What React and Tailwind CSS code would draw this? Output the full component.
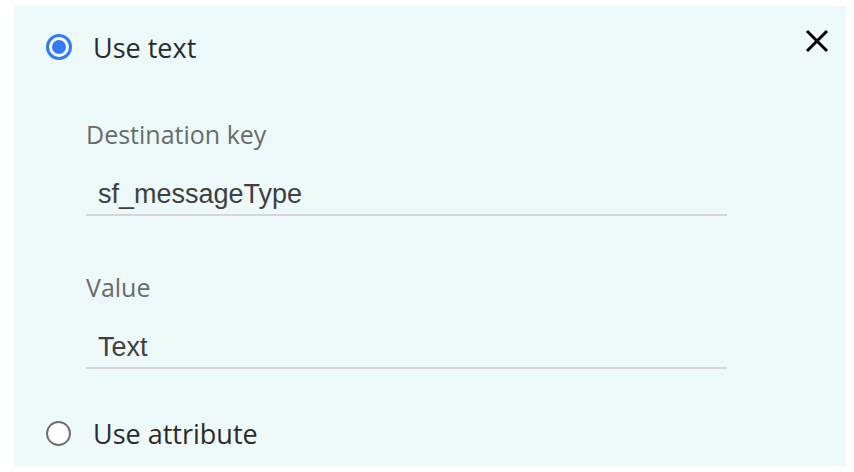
import React, { useState } from "react";

const labelFont = { fontFamily: '"Open Sans", "Noto Sans", sans-serif' };
const inputFont = { fontFamily: '"Liberation Sans", Arial, sans-serif' };

function Radio({ checked }) {
  if (checked) {
    return (
      <span className="flex h-[26px] w-[26px] shrink-0 items-center justify-center rounded-full border-[3px] border-[#2f7cf6] bg-white">
        <span className="h-[14px] w-[14px] rounded-full bg-[#2f7cf6]" />
      </span>
    );
  }
  return <span className="mt-[1px] h-[25px] w-[25px] shrink-0 rounded-full border-2 border-[#6f6f6f] bg-white" />;
}

function Field({ label, value }) {
  return (
    <div className="w-[641px]">
      <div className="h-[28px] text-[25px] leading-[28px] text-[#6b6b6b]" style={labelFont}>
        {label}
      </div>
      <div className="mt-[31px] border-b-2 border-[#d6d6d6] pb-[5px] pl-[12px] text-[27px] leading-[30px] text-[#404040]" style={inputFont}>
        {value}
      </div>
    </div>
  );
}

export default function App() {
  const [mode, setMode] = useState("text");

  return (
    <div className="min-h-screen bg-white pl-[14px] pt-[6px]">
      <div className="flex h-[460px] w-[832px] flex-col bg-[#edf9f9] pl-[32px] pr-[16px] pt-[28px]">
        <div className="flex h-[28px] items-start">
          <button onClick={() => setMode("text")} className="flex items-start gap-[21px]">
            <Radio checked={mode === "text"} />
            <span className="text-[27px] leading-[28px] text-[#2b2b2b]" style={labelFont}>
              Use text
            </span>
          </button>
          <div className="flex-1" />
          <button className="-mt-[5px] mr-[1px] text-black" title="Close">
            <svg width="24" height="24" viewBox="0 0 24 24">
              <path d="M2 2 L22 22 M22 2 L2 22" stroke="currentColor" strokeWidth="3" fill="none" />
            </svg>
          </button>
        </div>

        <div className="ml-[40px] mt-[58px]">
          <Field label="Destination key" value="sf_messageType" />
        </div>
        <div className="ml-[40px] mt-[57px]">
          <Field label="Value" value="Text" />
        </div>

        <div className="mt-[51px] flex h-[28px] items-start">
          <button onClick={() => setMode("attribute")} className="flex items-start gap-[22px]">
            <Radio checked={mode === "attribute"} />
            <span className="text-[27px] leading-[28px] text-[#2b2b2b]" style={labelFont}>
              Use attribute
            </span>
          </button>
        </div>
      </div>
    </div>
  );
}
